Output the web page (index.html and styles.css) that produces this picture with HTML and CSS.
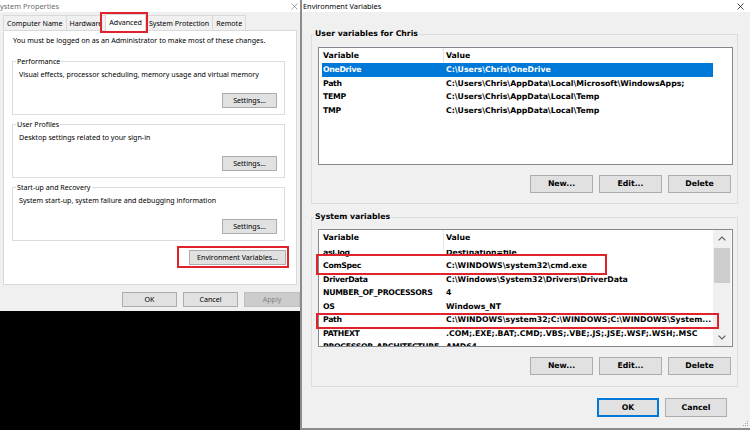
FILE: index.html
```html
<!DOCTYPE html>
<html>
<head>
<meta charset="utf-8">
<title>Environment Variables</title>
<link rel="stylesheet" href="styles.css">
</head>
<body>
<div class="screen">
  <div class="left-col">
    <div class="sysprops">
      <div class="sp-title">
        <span class="sp-title-text">System Properties</span>
        <svg class="x-left" width="7" height="7" viewBox="0 0 7 7"><path d="M0.5 0.5L6.5 6.5M6.5 0.5L0.5 6.5" stroke="#8a8a8a" stroke-width="0.8"/></svg>
      </div>
      <div class="tabs">
        <div class="tab tab-first">Computer Name</div>
        <div class="tab">Hardware</div>
        <div class="tab tab-active">Advanced</div>
        <div class="tab">System Protection</div>
        <div class="tab">Remote</div>
      </div>
      <div class="page">
        <p class="intro">You must be logged on as an Administrator to make most of these changes.</p>
        <fieldset class="grp">
          <legend>Performance</legend>
          <p class="grp-text">Visual effects, processor scheduling, memory usage and virtual memory</p>
          <div class="grp-btns"><button class="btn btn-settings">Settings...</button></div>
        </fieldset>
        <fieldset class="grp">
          <legend>User Profiles</legend>
          <p class="grp-text">Desktop settings related to your sign-in</p>
          <div class="grp-btns"><button class="btn btn-settings">Settings...</button></div>
        </fieldset>
        <fieldset class="grp">
          <legend>Start-up and Recovery</legend>
          <p class="grp-text">System start-up, system failure and debugging information</p>
          <div class="grp-btns"><button class="btn btn-settings">Settings...</button></div>
        </fieldset>
        <div class="env-btn-row"><button class="btn btn-env">Environment Variables...</button></div>
      </div>
      <div class="sp-footer">
        <button class="btn btn-foot">OK</button>
        <button class="btn btn-foot">Cancel</button>
        <button class="btn btn-foot btn-apply">Apply</button>
      </div>
      <div class="mark mark-tab"></div>
      <div class="mark mark-envbtn"></div>
    </div>
  </div>

  <div class="env">
    <div class="env-title">
      <span>Environment Variables</span>
      <svg class="x-right" width="7" height="7" viewBox="0 0 7 7"><path d="M0.5 0.5L6.5 6.5M6.5 0.5L0.5 6.5" stroke="#222" stroke-width="0.8"/></svg>
    </div>
    <div class="env-body">
      <fieldset class="egrp">
        <legend>User variables for Chris</legend>
        <div class="list">
          <div class="list-main">
            <div class="lhdr"><span class="c1">Variable</span><span class="c2">Value</span></div>
            <div class="lrows">
              <div class="lrow sel"><span class="c1">OneDrive</span><span class="c2">C:\Users\Chris\OneDrive</span></div>
              <div class="lrow"><span class="c1">Path</span><span class="c2">C:\Users\Chris\AppData\Local\Microsoft\WindowsApps;</span></div>
              <div class="lrow"><span class="c1">TEMP</span><span class="c2">C:\Users\Chris\AppData\Local\Temp</span></div>
              <div class="lrow"><span class="c1">TMP</span><span class="c2">C:\Users\Chris\AppData\Local\Temp</span></div>
            </div>
          </div>
          <div class="sbar-none"></div>
        </div>
        <div class="ebtns">
          <button class="ebtn">New...</button>
          <button class="ebtn">Edit...</button>
          <button class="ebtn">Delete</button>
        </div>
      </fieldset>

      <fieldset class="egrp egrp-sys">
        <legend>System variables</legend>
        <div class="list list-sys">
          <div class="list-main">
            <div class="lhdr lhdr-tall"><span class="c1">Variable</span><span class="c2">Value</span></div>
            <div class="lrows lrows-scrolled">
              <div class="lrow"><span class="c1">asl.log</span><span class="c2">Destination=file</span></div>
              <div class="lrow"><span class="c1">ComSpec</span><span class="c2">C:\WINDOWS\system32\cmd.exe</span></div>
              <div class="lrow"><span class="c1">DriverData</span><span class="c2">C:\Windows\System32\Drivers\DriverData</span></div>
              <div class="lrow"><span class="c1">NUMBER_OF_PROCESSORS</span><span class="c2">4</span></div>
              <div class="lrow"><span class="c1">OS</span><span class="c2">Windows_NT</span></div>
              <div class="lrow"><span class="c1">Path</span><span class="c2">C:\WINDOWS\system32;C:\WINDOWS;C:\WINDOWS\System...</span></div>
              <div class="lrow"><span class="c1">PATHEXT</span><span class="c2">.COM;.EXE;.BAT;.CMD;.VBS;.VBE;.JS;.JSE;.WSF;.WSH;.MSC</span></div>
              <div class="lrow"><span class="c1">PROCESSOR_ARCHITECTURE</span><span class="c2">AMD64</span></div>
            </div>
          </div>
          <div class="sbar">
            <div class="sb-arrow"><svg width="8" height="5" viewBox="0 0 8 5"><path d="M0.6 4.4L4 1L7.4 4.4" fill="none" stroke="#606060" stroke-width="1.2"/></svg></div>
            <div class="sb-thumb"></div>
            <div class="sb-track"></div>
            <div class="sb-arrow"><svg width="8" height="5" viewBox="0 0 8 5"><path d="M0.6 0.6L4 4L7.4 0.6" fill="none" stroke="#606060" stroke-width="1.2"/></svg></div>
          </div>
        </div>
        <div class="ebtns">
          <button class="ebtn">New...</button>
          <button class="ebtn">Edit...</button>
          <button class="ebtn">Delete</button>
        </div>
      </fieldset>

      <div class="okrow">
        <button class="okbtn okbtn-default">OK</button>
        <button class="okbtn">Cancel</button>
      </div>
    </div>
    <div class="mark mark-comspec"></div>
    <div class="mark mark-path"></div>
    <svg class="grip" width="7" height="7" viewBox="0 0 7 7"><rect x="5" y="1" width="1" height="1" fill="#a0a0a0"/><rect x="3" y="3" width="1" height="1" fill="#a0a0a0"/><rect x="5" y="3" width="1" height="1" fill="#a0a0a0"/><rect x="1" y="5" width="1" height="1" fill="#a0a0a0"/><rect x="3" y="5" width="1" height="1" fill="#a0a0a0"/><rect x="5" y="5" width="1" height="1" fill="#a0a0a0"/></svg>
  </div>
</div>
</body>
</html>
```

FILE: styles.css
```css
* { box-sizing: border-box; }
html, body { margin: 0; padding: 0; }
body { background: #000; }
p { margin: 0; }

.screen {
  display: flex;
  width: 750px;
  height: 430px;
  overflow: hidden;
}

/* ---------- System Properties (left) ---------- */
.left-col {
  width: 300px;
  flex: none;
  overflow: hidden;
  background: #000;
}
.sysprops {
  position: relative;
  height: 311px;
  background: #f0f0f0;
  font-family: "Noto Sans", "Liberation Sans", sans-serif;
  font-size: 7.1px;
  color: #000;
  display: flex;
  flex-direction: column;
}
.sp-title {
  height: 12px;
  flex: none;
  background: #fff;
  display: flex;
  align-items: center;
  justify-content: space-between;
  color: #6d6d6d;
  font-size: 7.4px;
  line-height: 10px;
  white-space: nowrap;
}
.sp-title-text { margin-left: -4px; }
.x-left { margin-right: 2px; }

.tabs {
  height: 18px;
  flex: none;
  display: flex;
  align-items: flex-end;
  padding-left: 3px;
  white-space: nowrap;
}
.tab {
  height: 15px;
  line-height: 14px;
  padding: 0 3px;
  border: 1px solid #d9d9d9;
  border-bottom: none;
  margin-left: -1px;
  background: #f0f0f0;
}
.tab-first { margin-left: 0; }
.tab-active {
  position: relative;
  z-index: 1;
  height: 17px;
  line-height: 14px;
  margin-bottom: -1px;
  background: #fff;
}

.page {
  flex: none;
  height: 255px;
  margin: 0 3px;
  background: #fff;
  border: 1px solid #d9d9d9;
}
.intro {
  margin: 4px 0 0 9px;
  line-height: 10px;
  white-space: nowrap;
}
.grp {
  margin: 11px 11px 0 8px;
  padding: 0 7px 6px 6px;
  border: 1px solid #dcdcdc;
  min-width: 0;
}
.grp + .grp { margin-top: 4px; }
.grp legend {
  padding: 0 1px;
  margin-left: -3px;
  line-height: 10px;
}
.grp-text {
  margin-top: 3px;
  line-height: 10px;
  white-space: nowrap;
}
.grp-btns {
  display: flex;
  justify-content: flex-end;
  margin-top: 14px;
}
.btn {
  font: inherit;
  height: 15px;
  padding: 0;
  border: 1px solid #adadad;
  background: #e1e1e1;
  color: #000;
  line-height: 13px;
  white-space: nowrap;
}
.btn-settings { width: 55px; }
.env-btn-row {
  display: flex;
  justify-content: flex-end;
  margin: 9px 10px 0 0;
}
.btn-env { width: 97px; }

.sp-footer {
  display: flex;
  justify-content: flex-end;
  gap: 6px;
  padding-top: 7px;
}
.btn-foot { width: 55px; }
.btn-apply {
  width: 56px;
  background: #cccccc;
  border-color: #bfbfbf;
  color: #838383;
}

.mark {
  position: absolute;
  border: 2px solid #e0222a;
}
.mark-tab { left: 100px; top: 12px; width: 48px; height: 21px; }
.mark-envbtn { left: 177px; top: 246px; width: 112px; height: 22px; }

/* ---------- Environment Variables (right) ---------- */
.env {
  position: relative;
  width: 450px;
  height: 430px;
  flex: none;
  background: #f0f0f0;
  border-left: 2px solid #8c8c8c;
  border-bottom: 2px solid #8c8c8c;
  font-family: "DejaVu Sans", "Verdana", sans-serif;
  font-weight: bold;
  font-size: 7.75px;
  color: #000;
  display: flex;
  flex-direction: column;
}
.env-title {
  height: 12px;
  flex: none;
  background: #fff;
  display: flex;
  align-items: center;
  justify-content: space-between;
  padding-left: 1px;
  font-family: "Noto Sans", "Liberation Sans", sans-serif;
  font-weight: normal;
  font-size: 7.4px;
  line-height: 10px;
  white-space: nowrap;
}
.x-right { margin-right: 6px; }

.env-body {
  padding: 17px 12px 0 9px;
}
.egrp {
  margin: 0;
  padding: 0 4px 10px 6px;
  border: 1px solid #dcdcdc;
  min-width: 0;
}
.egrp + .egrp { margin-top: 8px; }
.egrp-sys { padding-bottom: 11px; }
.egrp legend {
  padding: 0 1px;
  margin-left: -4px;
  line-height: 10px;
  white-space: nowrap;
}

.list {
  margin-top: 8px;
  height: 118px;
  border: 1px solid #828790;
  background: #fff;
  display: flex;
}
.list-sys { margin-top: 7px; }
.list-main {
  flex: 1;
  min-width: 0;
  padding-left: 3px;
  overflow: hidden;
  display: flex;
  flex-direction: column;
}
.lhdr {
  flex: none;
  display: grid;
  grid-template-columns: 124px 1fr;
  height: 15px;
  line-height: 15px;
  white-space: nowrap;
}
.lhdr .c1 {
  padding-left: 1px;
  margin-right: 2px;
  border-right: 1px solid #e5e5e5;
}
.lhdr-tall {
  height: 20px;
  position: relative;
  z-index: 1;
  background: #fff;
}
.lrows {
  flex: 1;
  overflow: hidden;
}
.lrows-scrolled .lrow:first-child { margin-top: -4.25px; }
.lrow {
  display: grid;
  grid-template-columns: 124px 1fr;
  height: 13.5px;
  line-height: 13.5px;
  white-space: nowrap;
}
.lrow .c1 {
  padding-left: 1px;
  overflow: hidden;
  letter-spacing: -0.3px;
}
.lrow .c2 { overflow: hidden; }
.lrow.sel {
  background: #0078d7;
  color: #fff;
}

.sbar-none {
  width: 18px;
  margin-right: 1px;
  flex: none;
}
.sbar {
  width: 18px;
  margin-right: 1px;
  flex: none;
  background: #f0f0f0;
  display: flex;
  flex-direction: column;
  align-items: center;
}
.sb-arrow {
  height: 17px;
  width: 18px;
  flex: none;
  display: flex;
  align-items: center;
  justify-content: center;
}
.sb-thumb {
  width: 16px;
  height: 35px;
  margin-top: 1px;
  flex: none;
  background: #cdcdcd;
}
.sb-track { flex: 1; }

.ebtns {
  display: flex;
  justify-content: flex-end;
  gap: 6px;
  margin-top: 10px;
  padding-right: 2px;
}
.ebtn, .okbtn {
  font: inherit;
  height: 18px;
  width: 63px;
  padding: 0;
  background: #e1e1e1;
  border: 1px solid #adadad;
  color: #000;
  line-height: 16px;
  white-space: nowrap;
}
.okrow {
  display: flex;
  justify-content: flex-end;
  gap: 6px;
  margin-top: 11px;
  padding-right: 11px;
}
.okbtn { width: 62px; height: 19px; }
.okbtn-default {
  border-color: #0078d7;
  box-shadow: inset 0 0 0 1px #0078d7;
}

.mark-comspec { left: 14px; top: 254px; width: 291px; height: 21px; }
.mark-path { left: 14px; top: 313px; width: 403px; height: 16px; }
.grip { position: absolute; right: 1px; bottom: 1px; }
```
